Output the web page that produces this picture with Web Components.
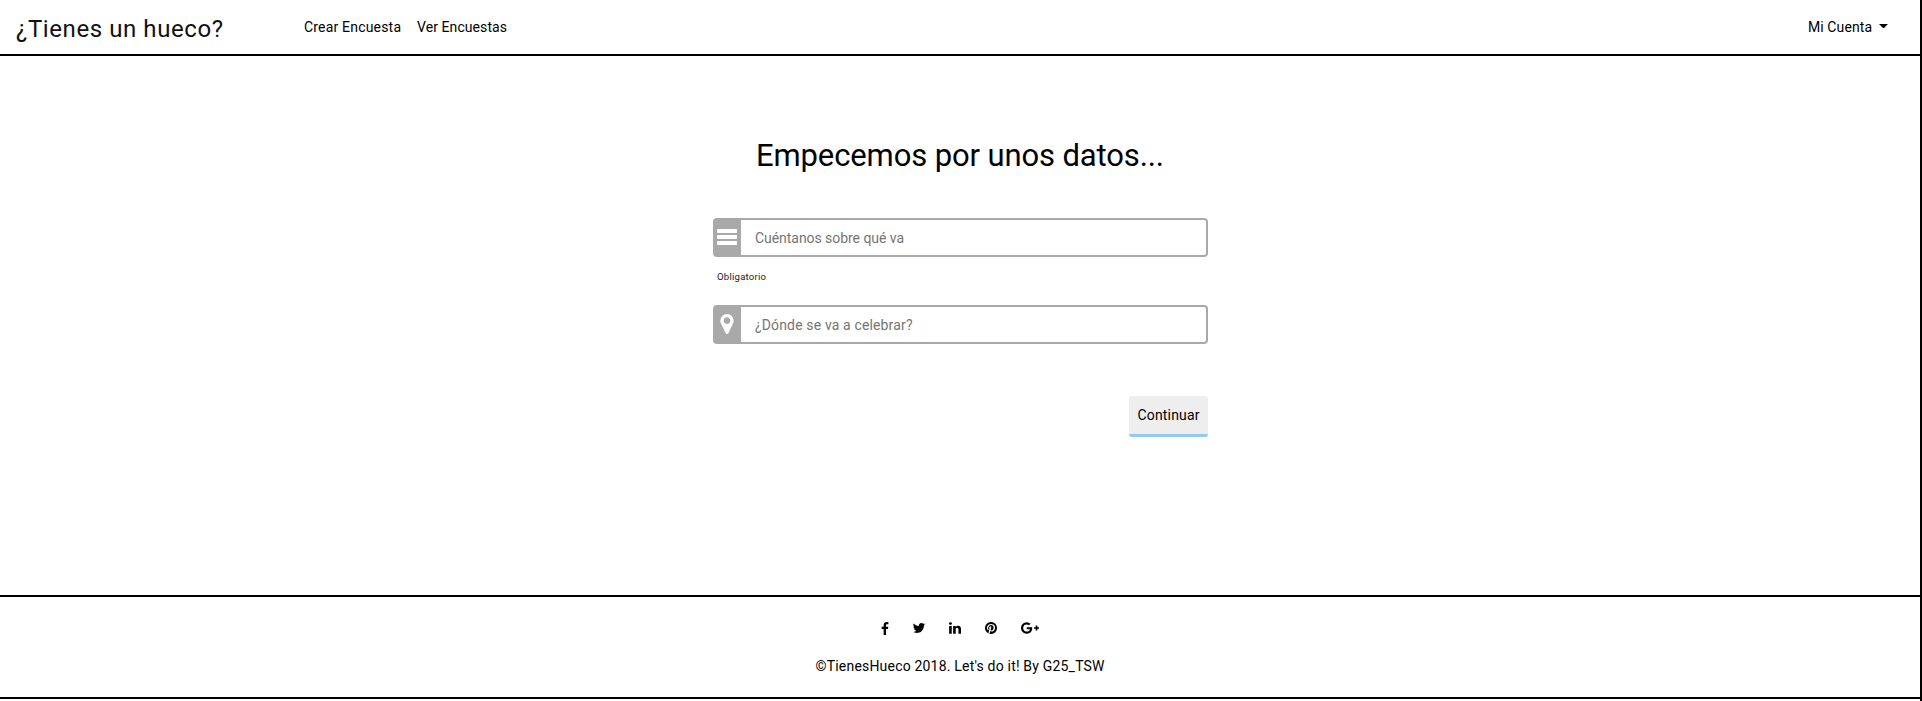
<!DOCTYPE html>
<html lang="es"><head><meta charset="utf-8"><title>¿Tienes un hueco?</title>
<style>html,body{margin:0;height:100%;overflow:hidden;background:#fff}body{font-family:Roboto,"Liberation Sans",sans-serif;color:#000}</style></head>
<body><hueco-app></hueco-app>
<script>
const FONT = 'Roboto, "Liberation Sans", sans-serif';
const ctx = document.createElement('canvas').getContext('2d');
// Letter spacing that makes a text of the given size span the wanted width.
function tracking(text, size, width) {
  ctx.font = size + 'px ' + FONT;
  return (width - ctx.measureText(text).width) / (text.length - 1) + 'px';
}
function define(name, html, setup) {
  const t = document.createElement('template');
  t.innerHTML = html;
  customElements.define(name, class extends HTMLElement {
    connectedCallback() {
      if (this.shadowRoot) return;
      this.attachShadow({mode: 'open'}).append(t.content.cloneNode(true));
      if (setup) setup(this, this.shadowRoot);
    }
  });
}
const ICONS = {
  bars: ['0 0 20 16', '<path d="M.7 0h18.6q.7 0 .7.7v2.6q0 .7-.7.7H.7Q0 4 0 3.300V.7Q0 0 .7 0zM.7 6h18.6q.7 0 .7.7v2.600q0 .7-.7.7H.7Q0 10 0 9.300V6.700Q0 6 .7 6zM.7 12h18.600q.7 0 .7.7v2.600q0 .7-.7.7H.7Q0 16 0 15.300v-2.600q0-.7.7-.7z"/>'],
  marker: ['384 128 1024 1536', '<path d="M1152 640q0-106-75-181t-181-75-181 75-75 181 75 181 181 75 181-75 75-181zm256 0q0 109-33 179l-364 774q-16 33-47.5 52t-67.5 19-67.5-19-46.5-52l-365-774q-33-70-33-179 0-212 150-362t362-150 362 150 150 362z"/>'],
  facebook: ['479 0 864 1664', '<path d="M1343 12v264h-157q-86 0-116 36t-30 108v189h293l-39 296h-254v759h-306v-759h-255v-296h255v-218q0-186 104-288.5t277-102.5q147 0 228 12z"/>'],
  twitter: ['0 0 1792 1792', '<path d="M1684 408q-67 98-162 167 1 14 1 42 0 130-38 259.5t-115.5 248.5-184.5 210.5-258 146-323 54.5q-271 0-496-145 35 4 78 4 225 0 401-138-105-2-188-64.5t-114-159.5q33 5 61 5 43 0 85-11-112-23-185.5-111.5t-73.5-205.5v-4q68 38 146 41-66-44-105-115t-39-154q0-88 44-163 121 149 294.5 238.5t371.5 99.5q-8-38-8-74 0-134 94.5-228.5t228.5-94.5q140 0 236 102 109-21 205-78-37 115-142 178 93-10 186-50z"/>'],
  linkedin: ['0 0 1792 1792', '<path d="M477 625v991h-330v-991h330zm21-306q1 73-50.5 122t-135.5 49h-2q-82 0-132-49t-50-122q0-74 51.5-122.5t134.5-48.5 133 48.5 51 122.5zm1166 729v568h-329v-530q0-105-40.5-164.5t-126.5-59.5q-63 0-105.5 34.5t-63.5 85.5q-11 30-11 81v553h-329q2-399 2-647t-1-296l-1-48h329v144h-2q20-32 41-56t56.5-52 87-43.5 114.5-15.5q171 0 275 113.5t104 332.5z"/>'],
  pinterest: ['0 0 1792 1792', '<path d="M1664 896q0 209-103 385.5t-279.5 279.5-385.5 103q-111 0-218-32 59-93 78-164 9-34 54-211 20 39 73 67.5t114 28.5q121 0 216-68.5t147-188.5 52-270q0-114-59.5-214t-172.500-163-255-63q-105 0-196 29t-154.5 77-109 110.5-67 129.5-21.5 134q0 104 40 183t117 111q30 12 38-20 2-7 8-31t8-30q6-23-11-43-51-61-51-151 0-151 104.5-259.5t273.5-108.5q151 0 235.5 82t84.5 213q0 170-68.5 289t-175.5 119q-61 0-98-43.5t-23-104.5q8-35 26.5-93.5t30-103 11.5-75.5q0-50-27-83t-77-33q-62 0-105 57t-43 142q0 73 25 122l-99 418q-17 70-13 177-206-91-333-281t-127-423q0-209 103-385.5t279.5-279.5 385.5-103 385.5 103 279.5 279.5 103 385.5z"/>'],
  google: ['0 0 2304 1792', '<path d="M1437 913q0 208-87 370.5t-248 254-369 91.5q-149 0-285-58t-234-156-156-234-58-285 58-285 156-234 234-156 285-58q286 0 491 192l-199 191q-117-113-292-113-123 0-227.5 62t-165.5 168.5-61 232.5 61 232.5 165.5 168.5 227.5 62q83 0 152.5-23t114.5-57.5 78.5-78.5 49-83 21.5-74h-416v-252h692q12 63 12 122zm867-122v210h-209v209h-210v-209h-209v-210h209v-209h210v209h209z"/>']
};
define('ui-icon', '<style>:host{display:block;flex:none}svg{display:block;fill:currentColor}</style><svg></svg>', (h, r) => {
  const s = r.querySelector('svg'), i = ICONS[h.getAttribute('name')];
  s.setAttribute('viewBox', i[0]); s.setAttribute('width', h.getAttribute('w')); s.setAttribute('height', h.getAttribute('h'));
  s.innerHTML = i[1];
});
define('ui-text', '<style>:host{display:block;white-space:nowrap;flex:none}</style><slot></slot>', h => {
  const size = +h.getAttribute('size'), w = +h.getAttribute('w');
  h.style.fontSize = size + 'px'; h.style.width = w + 'px';
  h.style.letterSpacing = tracking(h.textContent, size, w);
});
define('nav-bar', `<style>:host{display:flex;box-sizing:border-box;height:56px;border-bottom:2px solid #000;padding:0 32px 0 16px;align-items:center}
 ui-text{line-height:24px}.brand{line-height:32px;margin:3px 81px 0 0;color:#111}.nav{display:flex;gap:16px;flex:1}
 .account{display:flex;gap:7px;align-items:center}.caret{border:4.5px solid transparent;border-width:4px 4.5px 0;border-top-color:#000;margin-top:-2px}
 .caret{width:1px}</style>
 <ui-text class="brand" size="24" w="207">¿Tienes un hueco?</ui-text>
 <div class="nav"><ui-text size="14" w="97">Crear Encuesta</ui-text><ui-text size="14" w="90">Ver Encuestas</ui-text></div>
 <div class="account"><ui-text size="14" w="64">Mi Cuenta</ui-text><span class="caret"></span></div>`);
define('icon-field', `<style>:host{display:flex;box-sizing:border-box;width:495px;height:39px;border:2px solid #a9a9a9;border-radius:4px;background:#fff}
 .box{width:26px;background:#a9a9a9;color:#fff;display:flex;align-items:center;justify-content:center;padding:0 2px 1px 0;box-sizing:border-box}
 input{flex:1;min-width:0;border:0;outline:0;background:none;padding:0 14px;font:14px ${FONT};color:#757575}input::placeholder{color:#757575;opacity:1}</style>
 <div class="box"><slot></slot></div><input>`, (h, r) => {
  const i = r.querySelector('input'); i.placeholder = h.getAttribute('hint');
  i.style.letterSpacing = tracking(i.placeholder, 14, +h.getAttribute('w'));
});
define('continue-button', `<style>:host{display:block}button{display:flex;justify-content:center;align-items:center;width:79px;height:41px;box-sizing:border-box;padding:0;border:0;border-bottom:3px solid #91c9ef;border-radius:3px;background:#eee;color:#000;font-family:${FONT}}</style>
 <button><ui-text size="14" w="62">Continuar</ui-text></button>`);
define('survey-form', `<style>:host{display:flex;flex-direction:column;align-items:center;flex:1}
 .title{line-height:40px;margin-top:80px}.fields{width:495px;margin:42px 0 0 1px}.note{line-height:14px;margin:13px 0 21px 4px;color:#222}
 continue-button{display:flex;justify-content:flex-end;margin-top:52px}</style>
 <ui-text class="title" size="31" w="408">Empecemos por unos datos...</ui-text>
 <div class="fields"><icon-field hint="Cuéntanos sobre qué va" w="149"><ui-icon name="bars" w="20" h="16"></ui-icon></icon-field>
 <ui-text class="note" size="9.6" w="49">Obligatorio</ui-text>
 <icon-field hint="¿Dónde se va a celebrar?" w="157.5"><ui-icon name="marker" w="14" h="20"></ui-icon></icon-field>
 <continue-button></continue-button></div>`);
define('page-footer', `<style>:host{display:flex;flex-direction:column;align-items:center;box-sizing:border-box;height:104px;border:solid #000;border-width:2px 0;margin-bottom:2px}
 .social{display:flex;gap:22px;margin-top:24px;align-items:center}ui-text{line-height:20px;margin-top:21px}ui-icon[name=facebook]{margin-right:1px}ui-icon[name=google]{margin-left:1px}</style>
 <div class="social"><ui-icon name="facebook" w="8" h="13"></ui-icon><ui-icon name="twitter" w="14" h="14"></ui-icon><ui-icon name="linkedin" w="14" h="14"></ui-icon><ui-icon name="pinterest" w="14" h="14"></ui-icon><ui-icon name="google" w="18" h="14"></ui-icon></div>
 <ui-text size="14" w="289">©TienesHueco 2018. Let's do it! By G25_TSW</ui-text>`);
define('hueco-app', `<style>:host{display:flex;flex-direction:column;box-sizing:border-box;height:701px;width:1922px;border-right:2px solid #000}</style>
 <nav-bar></nav-bar><survey-form></survey-form><page-footer></page-footer>`);
</script></body></html>
